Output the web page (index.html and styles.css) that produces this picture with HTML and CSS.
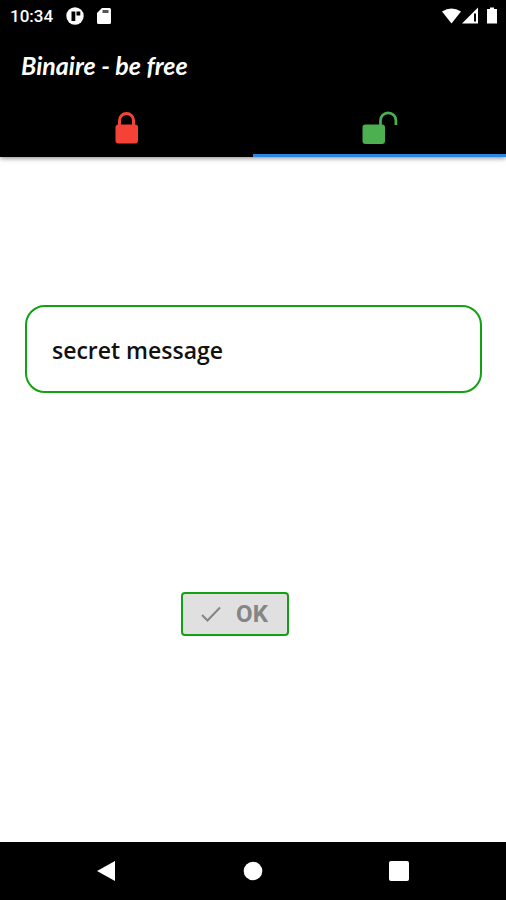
FILE: index.html
```html
<!DOCTYPE html>
<html lang="en">
<head>
  <meta charset="utf-8">
  <meta name="viewport" content="width=device-width, initial-scale=1">
  <title>Binaire - be free</title>
  <link rel="stylesheet" href="styles.css">
</head>

<body>

<header class="top">
  <div class="status">
    <span class="clock">10:34</span>
    <svg width="18" height="18" viewBox="0 0 18 18">
      <circle cx="9" cy="9" r="8.7" fill="#fff"/>
      <path d="M5.5 4.5h3.8v9.5H5.5zM10.5 4.5h3.8v4h-3.8z" fill="#000"/>
    </svg>
    <svg width="14" height="16" viewBox="0 0 14 16">
      <path d="M5 0h7.5Q14 0 14 1.500v13q0 1.500-1.500 1.500h-11Q0 16 0 14.500V5z" fill="#fff"/>
      <path d="M5.500 2h6v3h-6z" fill="#555"/>
    </svg>
    <svg class="status-right" width="56" height="18" viewBox="0 0 56 18">
      <path d="M0 4.500Q9.500-1.500 19 4.500L9.500 16.500z" fill="#fff"/>
      <path d="M20 16.500L36 0.500v16z" fill="#fff"/>
      <path d="M32 6.500h2V14.500h-2z" fill="#000"/>
      <path d="M48 0.500h4v1.500h3V16.500H45V2h3z" fill="#fff"/>
    </svg>
  </div>

  <h1 class="title">Binaire - be free</h1>

  <nav class="tabs">
    <button class="tab" type="button" aria-label="Lock">
      <svg width="24" height="34" viewBox="0 0 24 34">
        <path d="M4.500 15V9.500a7 7 0 0 1 14 0V15" fill="none" stroke="#f44336" stroke-width="3"/>
        <rect x="0.500" y="13.500" width="22.500" height="19" rx="3" fill="#f44336"/>
      </svg>
    </button>
    <button class="tab tab-active" type="button" aria-label="Unlock">
      <svg width="36" height="34" viewBox="0 0 36 34">
        <path d="M18.500 15V9.500a7.700 7.700 0 0 1 15.400 0V14" fill="none" stroke="#4caf50" stroke-width="2.700"/>
        <rect x="0.500" y="13.500" width="22.500" height="19.500" rx="3" fill="#4caf50"/>
      </svg>
    </button>
  </nav>
</header>

<main class="content">
  <input class="message" type="text" placeholder="secret message" aria-label="secret message">
  <button class="ok" type="button" disabled>
    <svg width="20" height="16" viewBox="0 0 20 16">
      <path d="M1 9l5.500 5.500L19 1.500" fill="none" stroke="#858585" stroke-width="2"/>
    </svg>
    OK
  </button>
</main>

<footer class="navbar">
  <button class="nav-btn" type="button" aria-label="Back">
    <svg width="20" height="22" viewBox="0 0 20 22"><path d="M0 11L18 1v20z" fill="#fff"/></svg>
  </button>
  <button class="nav-btn" type="button" aria-label="Home">
    <svg width="20" height="20" viewBox="0 0 20 20"><circle cx="10" cy="10" r="9.300" fill="#fff"/></svg>
  </button>
  <button class="nav-btn" type="button" aria-label="Recent apps">
    <svg width="20" height="20" viewBox="0 0 20 20"><rect width="20" height="20" rx="2" fill="#fff"/></svg>
  </button>
</footer>

</body>
</html>
```
FILE: styles.css
```css
* {
  box-sizing: border-box;
}
body {
  margin: 0;
  min-height: 100vh;
  display: flex;
  flex-direction: column;
  background-color: #fff;
  font-family: Roboto, "Liberation Sans", sans-serif;
}
button {
  margin: 0;
  padding: 0;
  border: none;
  background: none;
  font-family: inherit;
}
svg {
  display: block;
}

/* status bar, title and tabs */
.top {
  background-color: #000;
  color: #fff;
  box-shadow: 0 1px 5px rgba(0, 0, 0, 0.5);
}
.status {
  display: flex;
  align-items: center;
  gap: 13px;
  height: 32px;
  padding: 0 8px 0 10px;
}
.clock {
  font-size: 17px;
  font-weight: 500;
}
.status-right {
  margin-left: auto;
}
.title {
  margin: 0;
  padding: 0 21px 2px;
  font-family: Lato, "Liberation Sans", cursive;
  font-size: 25px;
  font-style: italic;
  font-weight: 700;
  line-height: 66px;
}
.tabs {
  display: flex;
}
.tab {
  flex: 1;
  display: flex;
  justify-content: center;
  height: 57px;
  padding-top: 11px;
}
.tab-active {
  border-bottom: 3px solid #2f86e0;
}

/* message form */
.content {
  flex: 1;
  display: flex;
  flex-direction: column;
  padding: 148px 24px 0 25px;
}
.message {
  width: 100%;
  height: 88px;
  padding: 2px 25px 0;
  border: 2px solid #14a014;
  border-radius: 20px;
  background-color: #fff;
  font-family: "Open Sans", "Noto Sans", sans-serif;
  font-size: 23px;
  font-weight: 600;
  color: #111;
}
.message::placeholder {
  color: #111;
  opacity: 1;
}
.ok {
  display: flex;
  align-items: center;
  justify-content: center;
  gap: 15px;
  align-self: center;
  width: 108px;
  height: 44px;
  margin: 199px 38px 0 0;
  border: 2px solid #14a014;
  border-radius: 4px;
  background-color: #e0e0e0;
  color: #858585;
  font-size: 24px;
  font-weight: 700;
}

/* system buttons */
.navbar {
  display: flex;
  justify-content: center;
  height: 58px;
  padding: 0 34px;
  background-color: #000;
}
.nav-btn {
  flex: 1;
  display: flex;
  align-items: center;
  justify-content: center;
}
```
